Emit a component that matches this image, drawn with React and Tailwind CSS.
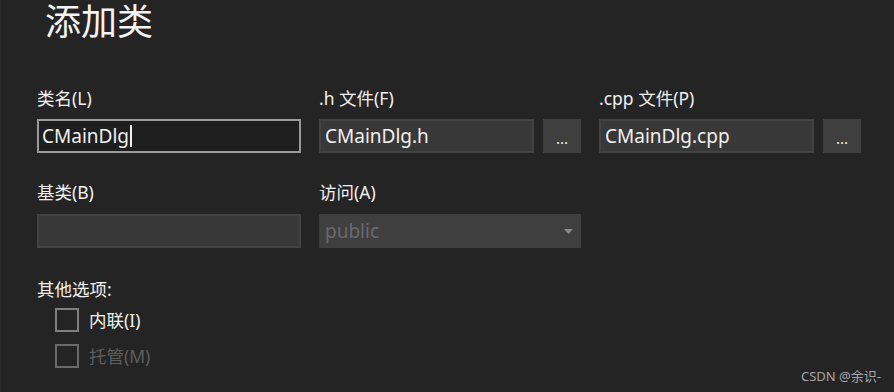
import React from "react";

const font = { fontFamily: '"Noto Sans", "Noto Sans CJK SC", sans-serif' };

const Label = ({ children, className = "" }) => (
  <div className={`h-[24px] text-[17.5px] leading-[24px] text-[#f1f1f1] ${className}`}>
    {children}
  </div>
);

const FileField = ({ label, value }) => (
  <div className="w-[262px]">
    <Label className="mb-[9px]">{label}</Label>
    <div className="flex gap-[9px]">
      <div className="flex h-[34px] w-[215px] items-center border-2 border-[#434343] bg-[#383838] px-[4px] text-[19px] text-[#f1f1f1]">
        {value}
      </div>
      <button className="flex h-[34px] w-[38px] items-end justify-center bg-[#3f3f3f] pb-[7px] text-[15px] leading-none text-[#f1f1f1]">
        ...
      </button>
    </div>
  </div>
);

const Checkbox = ({ label, disabled }) => (
  <div className="flex h-[24px] items-center gap-[10px]">
    <div
      className={`h-[24px] w-[24px] border-2 ${
        disabled ? "border-[#6a6a6a]" : "border-[#7f7f7f]"
      }`}
    />
    <span
      className={`text-[17.5px] leading-[24px] ${
        disabled ? "text-[#5e5e5e]" : "text-[#f1f1f1]"
      }`}
    >
      {label}
    </span>
  </div>
);

export default function App() {
  return (
    <div
      className="relative h-[392px] w-[894px] overflow-hidden border-l border-[#2c2c2c] bg-[#242424]"
      style={font}
    >
      <div className="pl-[44px] pt-[2px] text-[36px] leading-[40px] text-[#f4f4f4]">
        添加类
      </div>

      <div className="pl-[36px] pt-[44px]">
        {/* row 1 */}
        <div className="flex gap-[18px]">
          <div className="w-[264px]">
            <Label className="mb-[9px]">类名(L)</Label>
            <div className="flex h-[34px] items-center border-2 border-[#9a9a9a] bg-[#1e1e1e] px-[3px] text-[19px] text-[#f1f1f1]">
              CMainDlg
              <span className="ml-[1px] h-[22px] w-[2px] bg-[#f1f1f1]" />
            </div>
          </div>
          <FileField label=".h 文件(F)" value="CMainDlg.h" />
          <FileField label=".cpp 文件(P)" value="CMainDlg.cpp" />
        </div>

        {/* row 2 */}
        <div className="mt-[27px] flex gap-[18px]">
          <div className="w-[264px]">
            <Label className="mb-[10px]">基类(B)</Label>
            <div className="h-[34px] border-2 border-[#434343] bg-[#383838]" />
          </div>
          <div className="w-[262px]">
            <Label className="mb-[10px]">访问(A)</Label>
            <div className="flex h-[34px] items-center justify-between bg-[#3f3f3f] pl-[6px] pr-[8px] text-[19px] text-[#6b6b6b]">
              <span>public</span>
              <svg width="9" height="5" viewBox="0 0 9 5">
                <path d="M0 0h9L4.5 5z" fill="#8a8a8a" />
              </svg>
            </div>
          </div>
        </div>

        {/* options */}
        <Label className="mt-[29px]">其他选项:</Label>
        <div className="mt-[7px] flex flex-col gap-[12px] pl-[18px]">
          <Checkbox label="内联(I)" />
          <Checkbox label="托管(M)" disabled />
        </div>
      </div>

      <div className="absolute bottom-[8px] right-[13px] text-[13px] leading-[16px] text-[#a8a8a8]">
        CSDN @余识-
      </div>
    </div>
  );
}
